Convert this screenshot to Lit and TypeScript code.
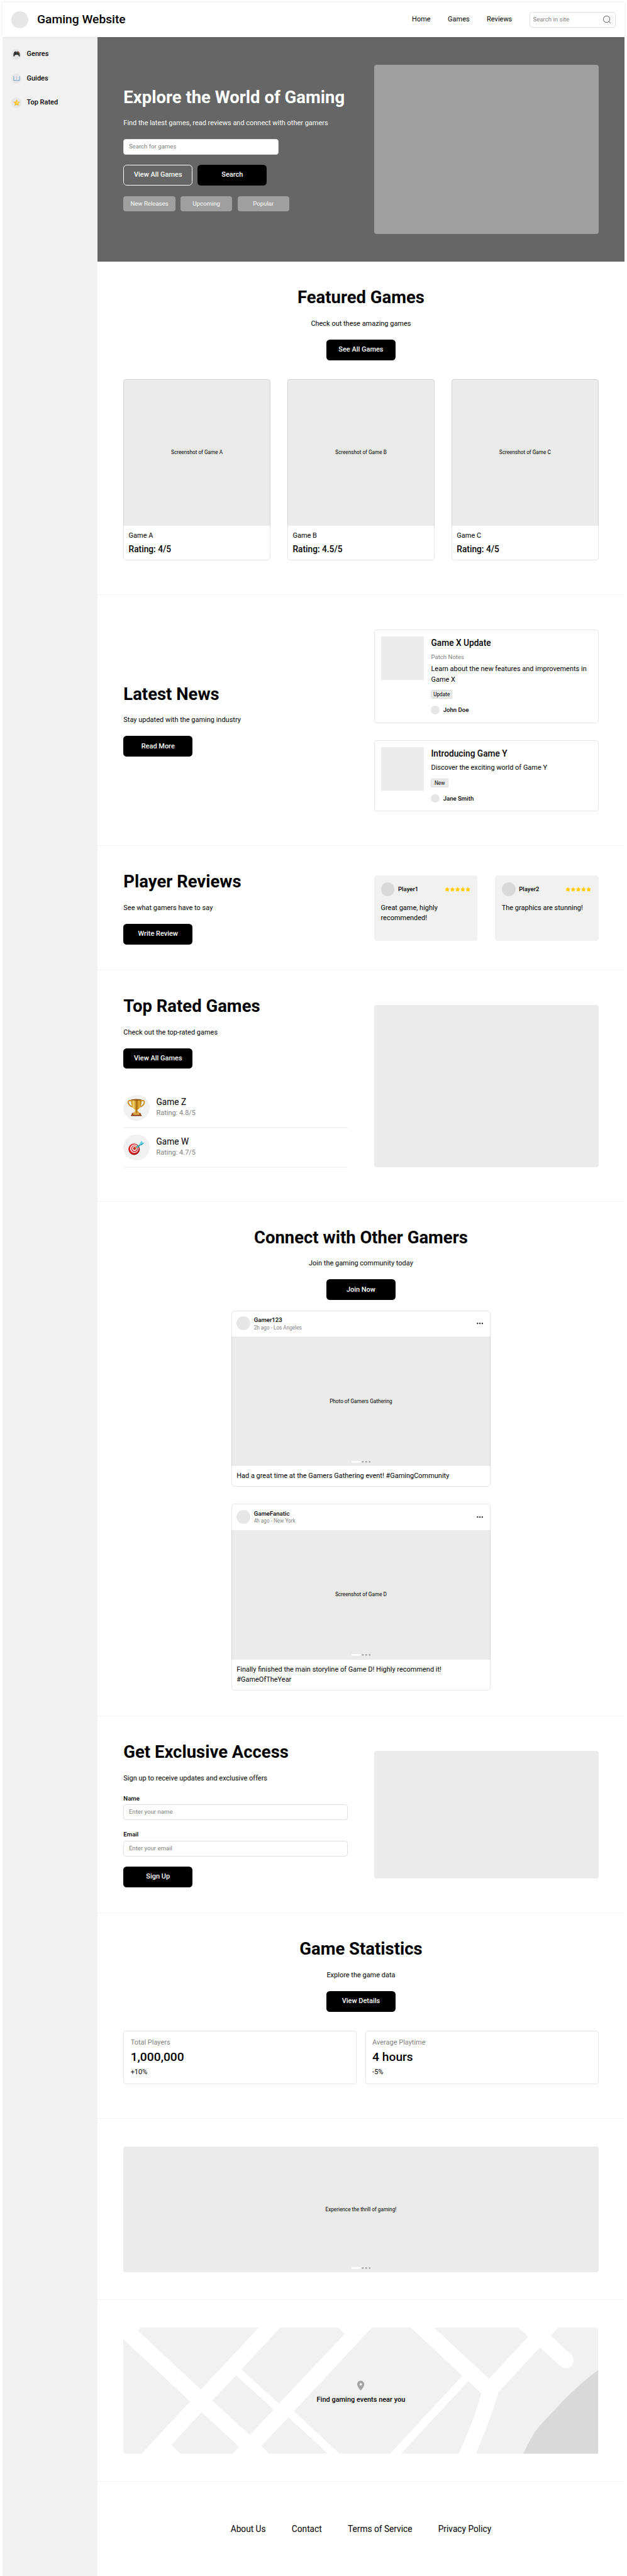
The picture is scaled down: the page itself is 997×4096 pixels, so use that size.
import { LitElement, html, css, svg } from "lit";
import { customElement } from "lit/decorators.js";

const trophy = svg`
  <defs><linearGradient id="gold"><stop offset="0" stop-color="#c58a16"/><stop offset=".25" stop-color="#f6d268"/><stop offset=".55" stop-color="#a8690a"/><stop offset=".75" stop-color="#e9b43a"/><stop offset="1" stop-color="#b2750f"/></linearGradient></defs>
  <path d="M10 6C3 2 0 6 2 11s6 7 11 8M30 6c7-4 10 0 8 5s-6 7-11 8" fill="none" stroke="#b97a12" stroke-width="2.6"/>
  <path d="M10 6C3 2 0 6 2 11s6 7 11 8M30 6c7-4 10 0 8 5s-6 7-11 8" fill="none" stroke="#e9b43a" stroke-width="1"/>
  <path d="M8 2h24c1 12-3 21-9.500 24h-5C11 23 7 14 8 2z" fill="url(#gold)"/>
  <ellipse cx="20" cy="2.500" rx="12" ry="1.600" fill="#8a5408"/>
  <path d="M17.500 25h5l.6 3.500 4.400 4.500h-15l4.400-4.500z" fill="url(#gold)"/>
  <path d="M10 33h20l1.500 6h-23z" fill="#9a4a12"/><path d="M13 34h14v3H13z" fill="#f0c355"/>
  <path d="M7.500 38h25v2h-25z" fill="#7b2c0a"/>`;

const target = svg`
  <circle cx="15" cy="24" r="13" fill="#9b1214"/><circle cx="14" cy="23" r="12" fill="#d9262a"/>
  <circle cx="15.500" cy="22.500" r="9.600" fill="#fff"/><circle cx="15.800" cy="22.500" r="7.600" fill="#c92428"/>
  <circle cx="16" cy="22.200" r="5.400" fill="#fff"/><circle cx="16.200" cy="22" r="3.500" fill="#b81a1e"/>
  <path d="M17 22l6-5" stroke="#d9a520" stroke-width="2"/>
  <path d="M20 18l9-6 1 2.500-8 7z" fill="#35a9b8"/>
  <path d="M28 11l4-7 2 4 5 1-4 3-5 3z" fill="#5fd0dc"/><path d="M29 13l8-3-5 5z" fill="#2b93a5"/>`;

const gamepad = svg`
  <path d="M4 1.500c1-1 2.500-.8 3 .3h2c.5-1.100 2-1.300 3-.3 2.300.4 3.400 5 3.600 9 .1 3-1.800 3.200-2.800 1.400L11.400 9H4.600l-1.400 2.900C2.200 13.700.3 13.500.4 10.500.6 6.500 1.700 1.900 4 1.500z" fill="#454545"/>
  <circle cx="5.200" cy="7" r="1.900" fill="#1c1c1c"/><circle cx="10.800" cy="7" r="1.900" fill="#1c1c1c"/>
  <path d="M2.600 4h2.800M4 2.600v2.800" stroke="#1c1c1c"/><circle cx="12.400" cy="3.400" r="1.200" fill="#d2502e"/><circle cx="11.400" cy="5" r=".7" fill="#4b8a55"/>`;

const book = svg`
  <path d="M.8 3h14.400v10.500H.8z" fill="#4d94bd"/><path d="M2 2.200c2-.6 4.600-.5 6 .9v9.700c-1.600-1-4-1-6-.6zM14 2.200c-2-.6-4.600-.5-6 .9v9.700c1.600-1 4-1 6-.6z" fill="#f3f1f6"/>
  <path d="M8 3v10" stroke="#8d8c9c" stroke-width=".8"/><path d="M3.300 4.500h3.200M3.300 6.500h3.200M3.300 8.500h3.200M9.500 4.500h3.200M9.500 6.500h3.200M9.500 8.500h3.200" stroke="#c3c1ce" stroke-width=".6"/>`;

const star = svg`<path d="M8 .8l2.100 4.800 5.200.5-3.900 3.500 1.100 5.100L8 12l-4.500 2.700 1.100-5.100L.7 6.100l5.200-.5z" fill="#ffc62e" stroke="#f0a91c" stroke-width=".5" stroke-linejoin="round"/><path d="M8 3.500l1.300 3.200 3 .3-3 3L8 9.700z" fill="#ffe78a"/>`;

const glyph = (art: unknown, size = 16) =>
  html`<svg width=${size} height=${size} viewBox="0 0 ${size} ${size}">${art}</svg>`;

@customElement("app-root")
export class AppRoot extends LitElement {
  static styles = css`
    :host { display: block; zoom: 0.68656; width: 1452px; height: 5966px; background: #fff; color: #000;
      font: 400 16px/24px Roboto, "Liberation Sans", sans-serif; overflow: hidden; }
    *, *::before, *::after { box-sizing: border-box; }
    h1, h2, h3, p { margin: 0; font-weight: inherit; font-size: inherit; }
    svg { display: block; flex: none; }
    .page { padding: 6px 6px 0; }
    .bar { position: relative; z-index: 1; height: 80px; padding: 0 20px; display: flex; align-items: center; background: #fff; box-shadow: 0 0 6px rgba(0, 0, 0, .12); }
    .logo { width: 40px; height: 40px; border-radius: 50%; background: #e6e6e6; }
    .brand { margin-left: 20px; font: 500 28px/36px Roboto, sans-serif; flex: 1; }
    .nav { display: flex; gap: 40px; margin-right: 40px; }
    .field { height: 36px; border: 1px solid #e0e0e0; border-radius: 6px; background: #fff; color: #808080; font-size: 14px; display: flex; align-items: center; padding: 0 11px; }
    .field.find { width: 200px; padding: 0 7px; justify-content: space-between; }
    .body { display: flex; height: 5880px; }
    .side { width: 220px; background: #f1f1f1; padding: 28px 20px; display: flex; flex-direction: column; gap: 32px; }
    .item { display: flex; align-items: center; gap: 12px; height: 24px; font-weight: 500; }
    .bubble { width: 24px; height: 24px; border-radius: 50%; background: #e6e6e6; display: grid; place-items: center; }
    .main { width: 1220px; }
    .section { padding: 60px; display: flex; gap: 60px; align-items: center; box-shadow: inset 0 -1px #f1f1f1; }
    .center { flex-direction: column; gap: 24px; }
    .col { width: 520px; display: flex; flex-direction: column; gap: 24px; }
    .title { font: 700 40px/48px Roboto, sans-serif; white-space: nowrap; }
    .btn { width: 160px; height: 48px; border-radius: 8px; background: #000; color: #fff; font-weight: 500; display: grid; place-items: center; }
    .hero { height: 520px; background: #666; color: #fff; box-shadow: none; }
    .hero .field { width: 360px; }
    .line { border: 1px solid #fff; background: none; }
    .row { display: flex; gap: 12px; }
    .chip { width: 120px; height: 36px; border-radius: 6px; background: #9f9f9f; font-size: 14px; display: grid; place-items: center; }
    .pic { background: #ebebeb; border-radius: 6px; width: 520px; }
    .hero .pic { height: 392px; background: #9f9f9f; }
    .games { display: flex; gap: 40px; padding: 20px 0; }
    .game { width: 340px; height: 420px; border-radius: 6px; position: relative; overflow: hidden; }
    .edge::after { content: ""; position: absolute; inset: 0; border: 1px solid rgba(0, 0, 0, .1); border-radius: 6px; }
    .shot { background: #ebebeb; display: grid; place-items: center; font-size: 12px; line-height: 16px; }
    .game .shot { height: 340px; }
    .info { padding: 11px 12px; }
    .rate { font: 500 20px/30px Roboto, sans-serif; margin-top: 4px; }
    .news { width: 520px; display: flex; flex-direction: column; gap: 40px; padding: 20px 0; }
    .story { border: 1px solid #e6e6e6; border-radius: 6px; padding: 15px 15px 19px; display: flex; gap: 16px; }
    .thumb { width: 100px; height: 100px; background: #ebebeb; flex: none; }
    .text { display: flex; flex-direction: column; gap: 6px; flex: 1; }
    .head { font: 500 20px/30px Roboto, sans-serif; }
    .kicker { font-size: 14px; line-height: 22px; color: #808080; }
    .tag { align-self: flex-start; min-width: 40px; height: 20px; margin-top: 6px; padding: 0 4px; border: 1px solid #dedede; border-radius: 2px; background: #ebebeb; font-size: 12px; line-height: 18px; text-align: center; }
    .who { display: flex; align-items: center; gap: 8px; margin-top: 10px; height: 20px; font: 500 14px/20px Roboto, sans-serif; }
    .dot20 { width: 20px; height: 20px; border-radius: 50%; background: #e6e6e6; }
    .reviews { display: flex; gap: 40px; width: 520px; }
    .review { width: 240px; height: 152px; border-radius: 6px; background: #f1f1f1; padding: 16px; display: flex; flex-direction: column; gap: 16px; }
    .rhead { display: flex; align-items: center; gap: 8px; font: 500 14px/20px Roboto, sans-serif; }
    .dot32 { width: 32px; height: 32px; border-radius: 50%; background: #e6e6e6; }
    .review .dot32 { background: #d9d9d9; }
    .grow { flex: 1; }
    .ranks { padding: 20px 0; }
    .rank { height: 92px; display: flex; align-items: center; gap: 16px; box-shadow: inset 0 -1px #f1f1f1, 0 1px #f1f1f1; }
    .disc { width: 60px; height: 60px; border-radius: 50%; background: #f1f1f1; display: grid; place-items: center; }
    .rname { font-size: 20px; line-height: 26px; }
    .muted { color: #808080; }
    .rated .pic { height: 376px; }
    .post { width: 600px; border-radius: 6px; position: relative; overflow: hidden; }
    .post + .post { margin-top: 16px; }
    .phead { height: 60px; padding: 0 17px 0 12px; display: flex; align-items: center; gap: 8px; }
    .pname { font: 500 14px/20px Roboto, sans-serif; }
    .ptime { font-size: 12px; line-height: 16px; color: #808080; }
    .post .shot { height: 300px; }
    .slides { display: grid; grid-template-rows: 1fr 16px 1fr; justify-items: center; }
    .slides p { grid-row: 2; }
    .slides svg { grid-row: 3; align-self: end; margin-bottom: 8px; }
    .caption { padding: 12px; }
    .group { display: flex; flex-direction: column; gap: 4px; }
    .label { font: 500 14px/20px Roboto, sans-serif; }
    .join .pic { height: 296px; }
    .stats { display: flex; gap: 20px; padding: 20px 0; }
    .stat { width: 540px; height: 124px; border: 1px solid #e6e6e6; border-radius: 6px; padding: 15px; }
    .value { font: 500 28px/36px Roboto, sans-serif; margin: 4px 0; }
    .wide { padding: 64px 60px; height: 420px; }
    .banner { width: 1100px; height: 292px; border-radius: 6px; }
    .map { width: 1100px; height: 292px; border-radius: 6px; overflow: hidden; display: grid; }
    .map > * { grid-area: 1 / 1; }
    .place { display: flex; flex-direction: column; align-items: center; gap: 6px; padding-top: 121px; font-weight: 500; }
    .foot { height: 220px; display: flex; justify-content: center; align-items: center; gap: 60px; font-size: 20px; }
  `;

  private post(name: string, when: string, shot: string, text: string) {
    return html`<div class="post edge">
      <div class="phead"><div class="dot32"></div>
        <div class="grow"><div class="pname">${name}</div><div class="ptime">${when}</div></div>
        <svg width="15" height="4" viewBox="0 0 15 4"><circle cx="2" cy="2" r="1.700"/><circle cx="7.500" cy="2" r="1.700"/><circle cx="13" cy="2" r="1.700"/></svg></div>
      ${this.slides("", shot)}
      <p class="caption">${text}</p></div>`;
  }

  private slides(kind: string, label: string) {
    return html`<div class="shot slides ${kind}"><p>${label}</p>
      <svg width="44" height="4" viewBox="0 0 44 4"><rect width="20" height="4" rx="2" fill="#fff"/><g fill="#a0a0a0"><circle cx="26" cy="2" r="2"/><circle cx="34" cy="2" r="2"/><circle cx="42" cy="2" r="2"/></g></svg></div>`;
  }

  private review(name: string, text: string) {
    return html`<div class="review"><div class="rhead"><div class="dot32"></div><span class="grow">${name}</span>
      <svg width="60" height="12" viewBox="0 0 60 12">${[0, 12, 24, 36, 48].map(
        (x) => svg`<path transform="translate(${x} 0)" d="M6 .8l1.600 3.300 3.500.4-2.300 2.500.6 3.600L6 9.300l-3.400 1.300.6-3.600L.9 4.500l3.500-.4z" fill="#fc0" stroke="#fc0" stroke-width=".5"/>`
      )}</svg></div><p>${text}</p></div>`;
  }

  private rank(art: unknown, name: string, rating: string) {
    return html`<div class="rank"><div class="disc">${glyph(art, 40)}</div>
      <div><div class="rname">${name}</div><div class="muted">${rating}</div></div></div>`;
  }

  private map() {
    return html`<div class="map"><svg width="1100" height="292" viewBox="0 0 1100 292">
      <g fill="#f1f1f1">
        <path d="M0 27L154.800 171 42.400 292H0z"/>
        <path d="M33.800 7.300L40 0H313.500L180 143.400z"/>
        <path d="M363.800 0H497.300L513 14.700 360.600 176 273.400 97.400z"/>
        <path d="M261.600 110.700L348 190 293 248.800 205.800 168.800z"/>
        <path d="M181.500 196L267.900 276 253.800 292H132.800L111.600 271.500z"/>
        <path d="M382.600 208L473.800 292H337.800L319.800 274z"/>
        <path d="M575.900 0H666L785.300 111.700 618.300 292H501.300L395.200 194z"/>
        <path d="M799.200 124.300L829.200 152.300Q811 219 776.800 292H643.300z"/>
        <path d="M720 0H915.400L937.800 21 847.200 118.700z"/>
        <path d="M965.100 46L1011.800 89.300A18.500 18.500 0 0 0 1037.500 62.700L990.200 19.300 1007.700 0H1100V292H816.700Q851 212 868.800 149.700z"/>
      </g>
      <path fill="#d9d9d9" d="M1100 98.700C1074 117 1051 137 1013.500 175L972.900 218.300C948 245 943 261 926.300 292H1100z"/></svg>
      <div class="place"><svg width="28" height="28" viewBox="0 0 24 24"><path fill="#a3a3a3" fill-rule="evenodd" d="M12 2C8.130 2 5 5.130 5 9c0 5.250 7 12 7 12s7-6.750 7-12c0-3.870-3.130-7-7-7zm0 9.500a2.500 2.500 0 1 1 0-5 2.500 2.500 0 0 1 0 5z"/></svg>
      <span>Find gaming events near you</span></div></div>`;
  }

  render() {
    return html`<div class="page">
      <header class="bar"><div class="logo"></div><h1 class="brand">Gaming Website</h1>
        <nav class="nav"><span>Home</span><span>Games</span><span>Reviews</span></nav>
        <div class="field find"><span>Search in site</span>
          <svg width="24" height="24" viewBox="0 0 24 24" fill="none" stroke="#444" stroke-width="1.300"><circle cx="11" cy="11" r="7.500"/><path d="M16.300 16.300L20.200 20.200"/></svg></div>
      </header>
      <div class="body">
        <aside class="side">
          <div class="item"><div class="bubble">${glyph(gamepad)}</div>Genres</div>
          <div class="item"><div class="bubble">${glyph(book)}</div>Guides</div>
          <div class="item"><div class="bubble">${glyph(star)}</div>Top Rated</div>
        </aside>
        <main class="main">
          <section class="section hero"><div class="col">
              <h2 class="title">Explore the World of Gaming</h2>
              <p>Find the latest games, read reviews and connect with other gamers</p>
              <div class="field">Search for games</div>
              <div class="row"><div class="btn line">View All Games</div><div class="btn">Search</div></div>
              <div class="row"><div class="chip">New Releases</div><div class="chip">Upcoming</div><div class="chip">Popular</div></div>
            </div><div class="pic"></div></section>

          <section class="section center">
            <h2 class="title">Featured Games</h2><p>Check out these amazing games</p><div class="btn">See All Games</div>
            <div class="games">${[["A", "4/5"], ["B", "4.5/5"], ["C", "4/5"]].map(
              ([n, r]) => html`<div class="game edge"><div class="shot">Screenshot of Game ${n}</div>
                <div class="info"><p>Game ${n}</p><p class="rate">Rating: ${r}</p></div></div>`
            )}</div></section>

          <section class="section"><div class="col"><h2 class="title">Latest News</h2><p>Stay updated with the gaming industry</p><div class="btn">Read More</div></div>
            <div class="news">
              <div class="story"><div class="thumb"></div><div class="text"><h3 class="head">Game X Update</h3><p class="kicker">Patch Notes</p>
                <p>Learn about the new features and improvements in Game X</p><div class="tag">Update</div>
                <div class="who"><div class="dot20"></div>John Doe</div></div></div>
              <div class="story"><div class="thumb"></div><div class="text"><h3 class="head">Introducing Game Y</h3>
                <p>Discover the exciting world of Game Y</p><div class="tag">New</div>
                <div class="who"><div class="dot20"></div>Jane Smith</div></div></div>
            </div></section>

          <section class="section"><div class="col"><h2 class="title">Player Reviews</h2><p>See what gamers have to say</p><div class="btn">Write Review</div></div>
            <div class="reviews">${this.review("Player1", "Great game, highly recommended!")}${this.review("Player2", "The graphics are stunning!")}</div></section>

          <section class="section rated"><div class="col"><h2 class="title">Top Rated Games</h2><p>Check out the top-rated games</p><div class="btn">View All Games</div>
              <div class="ranks">${this.rank(trophy, "Game Z", "Rating: 4.8/5")}${this.rank(target, "Game W", "Rating: 4.7/5")}</div></div>
            <div class="pic"></div></section>

          <section class="section center"><h2 class="title">Connect with Other Gamers</h2><p>Join the gaming community today</p><div class="btn">Join Now</div>
            ${this.post("Gamer123", "2h ago - Los Angeles", "Photo of Gamers Gathering", "Had a great time at the Gamers Gathering event! #GamingCommunity")}
            ${this.post("GameFanatic", "4h ago - New York", "Screenshot of Game D", "Finally finished the main storyline of Game D! Highly recommend it! #GameOfTheYear")}</section>

          <section class="section join"><div class="col"><h2 class="title">Get Exclusive Access</h2><p>Sign up to receive updates and exclusive offers</p>
              <div class="group"><span class="label">Name</span><div class="field">Enter your name</div></div>
              <div class="group"><span class="label">Email</span><div class="field">Enter your email</div></div>
              <div class="btn">Sign Up</div></div><div class="pic"></div></section>

          <section class="section center"><h2 class="title">Game Statistics</h2><p>Explore the game data</p><div class="btn">View Details</div>
            <div class="stats">
              <div class="stat"><p class="muted">Total Players</p><p class="value">1,000,000</p><p>+10%</p></div>
              <div class="stat"><p class="muted">Average Playtime</p><p class="value">4 hours</p><p>-5%</p></div></div></section>

          <section class="section wide">${this.slides("banner", "Experience the thrill of gaming!")}</section>
          <section class="section wide">${this.map()}</section>
          <footer class="foot"><span>About Us</span><span>Contact</span><span>Terms of Service</span><span>Privacy Policy</span></footer>
        </main>
      </div></div>`;
  }
}
